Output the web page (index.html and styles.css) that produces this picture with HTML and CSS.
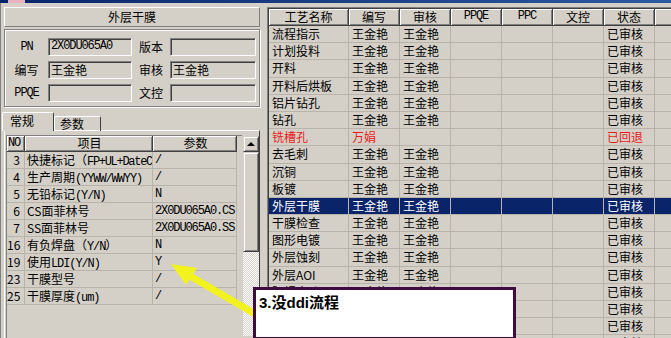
FILE: index.html
```html
<!DOCTYPE html>
<html lang="zh-CN">
<head>
  <meta charset="UTF-8">
  <title>工艺流程</title>
  <link rel="stylesheet" href="styles.css">
</head>
<body>
  <div class="titlebar"><span class="app-icon"></span></div>

  <div class="main">
    <!-- left: current step detail -->
    <div class="left">
      <div class="step-title">外层干膜</div>

      <div class="info-box">
        <span class="lbl en">PN</span><span class="field en">2X0DU065A0</span>
        <span class="lbl">版本</span><span class="field"></span>
        <span class="lbl">编写</span><span class="field">王金艳</span>
        <span class="lbl">审核</span><span class="field">王金艳</span>
        <span class="lbl en">PPQE</span><span class="field"></span>
        <span class="lbl">文控</span><span class="field"></span>
      </div>

      <div class="tabs">
        <div class="tab active">常规</div>
        <div class="tab">参数</div>
      </div>

      <div class="tab-panel">
        <div class="param-grid">
          <div class="p-row p-head">
            <span class="c-no en">NO</span><span class="c-item">项目</span><span class="c-val">参数</span>
          </div>
          <div class="p-row"><span class="c-no">3</span><span class="c-item">快捷标记（<span class="en tight">FP+UL+DateC</span></span><span class="c-val en">/</span></div>
          <div class="p-row"><span class="c-no">4</span><span class="c-item">生产周期<span class="en">(YYWW/WWYY)</span></span><span class="c-val en">/</span></div>
          <div class="p-row"><span class="c-no">5</span><span class="c-item">无铅标记<span class="en">(Y/N)</span></span><span class="c-val en">N</span></div>
          <div class="p-row"><span class="c-no">6</span><span class="c-item">CS面菲林号</span><span class="c-val en">2X0DU065A0.CS</span></div>
          <div class="p-row"><span class="c-no">7</span><span class="c-item">SS面菲林号</span><span class="c-val en">2X0DU065A0.SS</span></div>
          <div class="p-row"><span class="c-no">16</span><span class="c-item">有负焊盘（<span class="en">Y/N</span>）</span><span class="c-val en">N</span></div>
          <div class="p-row"><span class="c-no">19</span><span class="c-item">使用<span class="en">LDI(Y/N)</span></span><span class="c-val en">Y</span></div>
          <div class="p-row"><span class="c-no">23</span><span class="c-item">干膜型号</span><span class="c-val en">/</span></div>
          <div class="p-row"><span class="c-no">25</span><span class="c-item">干膜厚度<span class="en">(um)</span></span><span class="c-val en">/</span></div>
        </div>

        <div class="vscroll">
          <div class="sb-btn"><span class="sb-up"></span></div>
          <div class="sb-thumb"></div>
          <div class="sb-track"></div>
        </div>
      </div>
    </div>

    <!-- right: process list -->
    <div class="right">
      <div class="flow-grid">
        <div class="r-row r-head">
          <span>工艺名称</span><span>编写</span><span>审核</span><span class="en">PPQE</span><span class="en">PPC</span><span>文控</span><span>状态</span><span>难</span>
        </div>
        <div class="r-row"><span>流程指示</span><span>王金艳</span><span>王金艳</span><span></span><span></span><span></span><span>已审核</span><span></span></div>
        <div class="r-row"><span>计划投料</span><span>王金艳</span><span>王金艳</span><span></span><span></span><span></span><span>已审核</span><span></span></div>
        <div class="r-row"><span>开料</span><span>王金艳</span><span>王金艳</span><span></span><span></span><span></span><span>已审核</span><span></span></div>
        <div class="r-row"><span>开料后烘板</span><span>王金艳</span><span>王金艳</span><span></span><span></span><span></span><span>已审核</span><span></span></div>
        <div class="r-row"><span>铝片钻孔</span><span>王金艳</span><span>王金艳</span><span></span><span></span><span></span><span>已审核</span><span></span></div>
        <div class="r-row"><span>钻孔</span><span>王金艳</span><span>王金艳</span><span></span><span></span><span></span><span>已审核</span><span></span></div>
        <div class="r-row returned"><span>铣槽孔</span><span>万娟</span><span></span><span></span><span></span><span></span><span>已回退</span><span></span></div>
        <div class="r-row"><span>去毛刺</span><span>王金艳</span><span>王金艳</span><span></span><span></span><span></span><span>已审核</span><span></span></div>
        <div class="r-row"><span>沉铜</span><span>王金艳</span><span>王金艳</span><span></span><span></span><span></span><span>已审核</span><span></span></div>
        <div class="r-row"><span>板镀</span><span>王金艳</span><span>王金艳</span><span></span><span></span><span></span><span>已审核</span><span></span></div>
        <div class="r-row selected"><span>外层干膜</span><span>王金艳</span><span>王金艳</span><span></span><span></span><span></span><span>已审核</span><span></span></div>
        <div class="r-row"><span>干膜检查</span><span>王金艳</span><span>王金艳</span><span></span><span></span><span></span><span>已审核</span><span></span></div>
        <div class="r-row"><span>图形电镀</span><span>王金艳</span><span>王金艳</span><span></span><span></span><span></span><span>已审核</span><span></span></div>
        <div class="r-row"><span>外层蚀刻</span><span>王金艳</span><span>王金艳</span><span></span><span></span><span></span><span>已审核</span><span></span></div>
        <div class="r-row"><span>外层AOI</span><span>王金艳</span><span>王金艳</span><span></span><span></span><span></span><span>已审核</span><span></span></div>
        <div class="r-row"><span>阻焊塞孔</span><span>王金艳</span><span>王金艳</span><span></span><span></span><span></span><span>已审核</span><span></span></div>
        <div class="r-row"><span></span><span></span><span></span><span></span><span></span><span></span><span>已审核</span><span></span></div>
        <div class="r-row"><span></span><span></span><span></span><span></span><span></span><span></span><span>已审核</span><span></span></div>
        <div class="r-row"><span></span><span></span><span></span><span></span><span></span><span></span><span>已审核</span><span></span></div>
      </div>
    </div>
  </div>

  <!-- annotation drawn on top of the screenshot -->
  <svg class="arrow" width="671" height="338" viewBox="0 0 671 338">
    <line x1="190" y1="276" x2="262" y2="318" stroke="#f2f21e" stroke-width="7"/>
    <polygon points="171,264 197,268 186,285" fill="#f2f21e"/>
  </svg>
  <div class="callout">3.没ddi流程</div>
</body>
</html>
```

FILE: styles.css
```css
body {
  margin: 0;
  width: 671px;
  height: 338px;
  overflow: hidden;
  position: relative;
  background-color: #d4d0c8;
  font-family: 'Noto Sans CJK SC', 'Noto Sans', sans-serif;
  font-size: 12px;
  color: #000;
}

.en {
  font-family: 'Liberation Mono', monospace;
  font-size: 12px;
  letter-spacing: -1.1px;
}

.en.tight {
  letter-spacing: -1.3px;
}

.titlebar {
  height: 3px;
  background: linear-gradient(to right, #0a246a, #2a5aa0);
  display: flex;
}

.app-icon {
  width: 17px;
  margin-left: 8px;
  background-color: #e8b0c0;
}

.main {
  display: flex;
  height: 335px;
  gap: 4px;
}

/* left panel */
.left {
  width: 256px;
  padding: 4px 3px 0 3px;
  border-left: 1px solid #808080;
  display: flex;
  flex-direction: column;
}

.step-title {
  height: 18px;
  line-height: 18px;
  text-align: center;
  border: 1px solid;
  border-color: #fff #808080 #808080 #fff;
}

.info-box {
  margin-top: 2px;
  padding: 8px 0 4px 0;
  border: 1px solid #808080;
  box-shadow: inset 1px 1px #fff, 1px 1px #fff;
  display: grid;
  grid-template-columns: 43px 84px 38px 86px;
  grid-auto-rows: 18px;
  row-gap: 5px;
}

.lbl {
  text-align: center;
  line-height: 18px;
}

.field {
  border: 1px solid;
  border-color: #808080 #fff #fff #808080;
  box-shadow: inset 1px 1px #404040;
  padding-left: 2px;
  line-height: 15px;
  overflow: hidden;
  white-space: nowrap;
}

.tabs {
  margin-top: 6px;
  height: 18px;
  display: flex;
  align-items: flex-end;
  position: relative;
  z-index: 1;
}

.tab {
  height: 14px;
  line-height: 14px;
  width: 40px;
  padding-left: 5px;
  border: 1px solid;
  border-bottom: none;
  border-color: #fff #404040 transparent #fff;
  border-radius: 2px 2px 0 0;
}

.tab.active {
  height: 18px;
  line-height: 16px;
  width: 43px;
  margin-left: -2px;
  padding-left: 7px;
  background-color: #d4d0c8;
}

.tab-panel {
  flex: 1;
  display: flex;
  align-items: flex-start;
  padding: 4px 0 0 1px;
  border: 1px solid;
  border-color: #fff #404040 transparent #fff;
  margin-top: -1px;
}

/* parameter grid */
.param-grid {
  width: 235px;
  height: 205px;
  border-left: 1px solid #808080;
  border-top: 1px solid #808080;
}

.p-row {
  display: flex;
  height: 17px;
}

.p-row > span {
  box-sizing: border-box;
  border-right: 1px solid #b8b4ac;
  border-bottom: 1px solid #b8b4ac;
  line-height: 16px;
  padding-left: 2px;
  white-space: nowrap;
  overflow: hidden;
}

.c-no {
  width: 18px;
  text-align: right;
  padding-right: 4px;
  padding-left: 0 !important;
}

.c-item {
  width: 128px;
}

.c-val {
  width: 84px;
}

.p-head {
  height: 16px;
}

.p-head > span {
  text-align: center;
  line-height: 14px;
  overflow: visible;
  border-right-color: #404040;
  border-bottom-color: #404040;
  box-shadow: inset 1px 1px #fff, inset -1px -1px #808080;
}

.p-head .c-no {
  text-align: left;
  padding-left: 1px !important;
}

/* scrollbar */
.vscroll {
  width: 16px;
  margin-left: 1px;
  margin-top: 1px;
  display: flex;
  flex-direction: column;
  height: 200px;
}

.sb-btn,
.sb-thumb {
  box-sizing: border-box;
  border: 1px solid;
  border-color: #d4d0c8 #404040 #404040 #d4d0c8;
  box-shadow: inset 1px 1px #fff, inset -1px -1px #808080;
}

.sb-btn {
  height: 16px;
  display: flex;
  justify-content: center;
  align-items: center;
}

.sb-up {
  width: 0;
  height: 0;
  border-left: 4px solid transparent;
  border-right: 4px solid transparent;
  border-bottom: 4px solid #000;
}

.sb-thumb {
  height: 100px;
}

.sb-track {
  flex: 1;
  background: repeating-conic-gradient(#fff 0 25%, #d4d0c8 0 50%) 0 0 / 2px 2px;
}

/* right panel */
.right {
  flex: 1;
  margin-top: 4px;
  border-top: 1px solid #808080;
  border-left: 1px solid #808080;
  overflow: hidden;
}

.flow-grid {
  border-top: 1px solid #404040;
  border-left: 1px solid #404040;
  width: 460px;
}

.r-row {
  display: flex;
  height: 17.2px;
}

.r-row > span {
  box-sizing: border-box;
  width: 51px;
  flex-shrink: 0;
  border-right: 1px solid #b8b4ac;
  border-bottom: 1px solid #b8b4ac;
  padding-left: 3px;
  line-height: 16px;
  white-space: nowrap;
  overflow: hidden;
}

.r-row > span:first-child {
  width: 80px;
}

.r-head {
  height: 17px;
}

.r-head > span {
  text-align: center;
  padding-left: 0;
  line-height: 15px;
  border-right-color: #404040;
  border-bottom-color: #404040;
  box-shadow: inset 1px 1px #fff, inset -1px -1px #808080;
}

.r-row.returned {
  color: #e81c1c;
}

.r-row.selected {
  background-color: #0a246a;
  color: #fff;
}

/* annotation */
.arrow {
  position: absolute;
  left: 0;
  top: 0;
  pointer-events: none;
}

.callout {
  position: absolute;
  left: 253px;
  top: 287px;
  width: 263px;
  height: 53px;
  box-sizing: border-box;
  border: 3px solid #3e0c40;
  background-color: #fff;
  padding: 4px 0 0 3px;
  font-family: 'Liberation Sans', 'Noto Sans CJK SC', sans-serif;
  font-weight: bold;
  font-size: 15px;
  line-height: 17px;
}
```
